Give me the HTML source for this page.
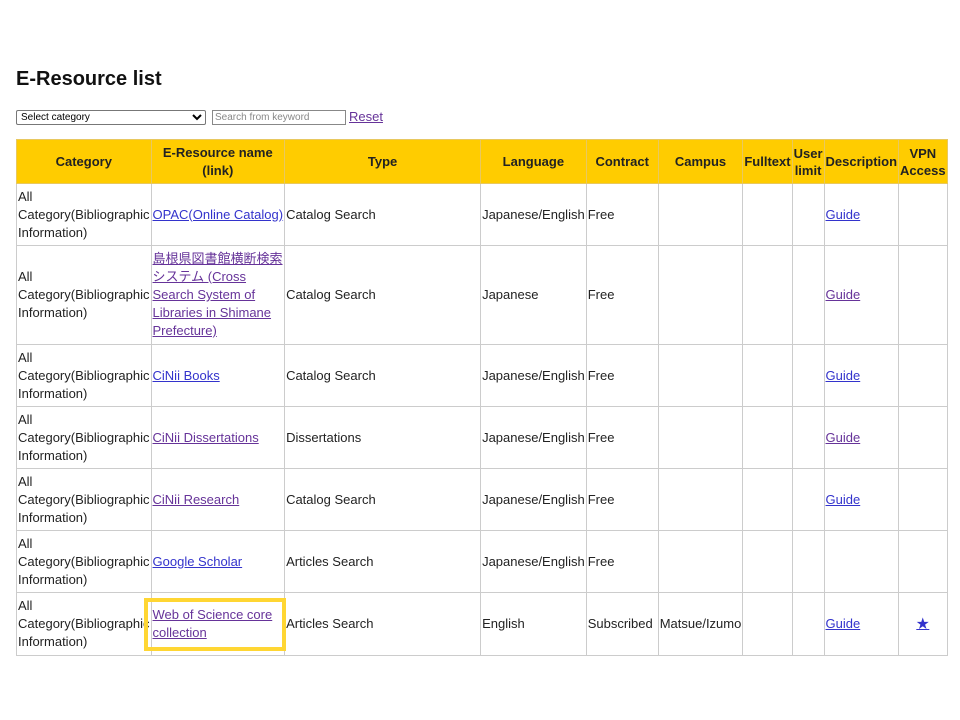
<!DOCTYPE html>
<html><head><meta charset="utf-8"><style>
body{margin:0;background:#fff;font-family:"Liberation Sans","Noto Sans CJK JP",sans-serif;color:#222;}
h1{position:absolute;left:16px;top:68px;margin:0;font-size:20px;font-weight:bold;color:#111;}
select{position:absolute;left:16px;top:110px;width:190px;height:15px;font-size:10px;padding:0;border:1px solid #777;border-radius:2px;background:#fff;}
.kw{position:absolute;left:212px;top:110px;width:128px;height:13px;border:1px solid #888;font-size:10px;color:#888;padding:0 2px;line-height:13px;}
.reset{position:absolute;left:349px;top:109px;font-size:13px;color:#663399;}
table{position:absolute;left:16px;top:139px;border-collapse:collapse;table-layout:fixed;font-size:13px;}
td,th{border:1px solid #ccc;padding:0 1px;overflow:hidden;white-space:nowrap;line-height:18px;vertical-align:middle;text-align:left;}
th{background:#ffcc00;text-align:center;font-weight:bold;color:#222;height:43px;border-color:#e8c860;}
td.w{white-space:normal;}
a{color:#3333cc;}
a.v{color:#663399;}
.hl{position:absolute;left:144px;top:598px;width:134px;height:45px;border:4px solid #ffd633;}
</style></head><body>
<h1>E-Resource list</h1>
<select><option>Select category</option></select>
<div class="kw">Search from keyword</div>
<a class="reset" href="#">Reset</a>
<table>
<colgroup><col style="width:133px"><col style="width:131px"><col style="width:196px"><col style="width:102px"><col style="width:72px"><col style="width:84px"><col style="width:48px"><col style="width:28px"><col style="width:70px"><col style="width:42px"></colgroup>
<tr><th>Category</th><th>E-Resource name<br>(link)</th><th>Type</th><th>Language</th><th>Contract</th><th>Campus</th><th>Fulltext</th><th style="line-height:17px">User<br>limit</th><th>Description</th><th style="line-height:17px">VPN<br>Access</th></tr>
<tr style="height:62px"><td>All<br>Category(Bibliographic<br>Information)</td><td><a href="#">OPAC(Online Catalog)</a></td><td>Catalog Search</td><td>Japanese/English</td><td>Free</td><td></td><td></td><td></td><td><a href="#">Guide</a></td><td></td></tr>
<tr style="height:99px"><td>All<br>Category(Bibliographic<br>Information)</td><td class="w"><a class="v" href="#">島根県図書館横断検索システム (Cross Search System of Libraries in Shimane Prefecture)</a></td><td>Catalog Search</td><td>Japanese</td><td>Free</td><td></td><td></td><td></td><td><a class="v" href="#">Guide</a></td><td></td></tr>
<tr style="height:62px"><td>All<br>Category(Bibliographic<br>Information)</td><td><a href="#">CiNii Books</a></td><td>Catalog Search</td><td>Japanese/English</td><td>Free</td><td></td><td></td><td></td><td><a href="#">Guide</a></td><td></td></tr>
<tr style="height:62px"><td>All<br>Category(Bibliographic<br>Information)</td><td><a class="v" href="#">CiNii Dissertations</a></td><td>Dissertations</td><td>Japanese/English</td><td>Free</td><td></td><td></td><td></td><td><a class="v" href="#">Guide</a></td><td></td></tr>
<tr style="height:62px"><td>All<br>Category(Bibliographic<br>Information)</td><td><a class="v" href="#">CiNii Research</a></td><td>Catalog Search</td><td>Japanese/English</td><td>Free</td><td></td><td></td><td></td><td><a href="#">Guide</a></td><td></td></tr>
<tr style="height:62px"><td>All<br>Category(Bibliographic<br>Information)</td><td><a href="#">Google Scholar</a></td><td>Articles Search</td><td>Japanese/English</td><td>Free</td><td></td><td></td><td></td><td></td><td></td></tr>
<tr style="height:63px"><td>All<br>Category(Bibliographic<br>Information)</td><td class="w"><a class="v" href="#">Web of Science core collection</a></td><td>Articles Search</td><td>English</td><td>Subscribed</td><td>Matsue/Izumo</td><td></td><td></td><td><a href="#">Guide</a></td><td style="text-align:center"><a href="#">★</a></td></tr>
</table>
<div class="hl"></div>
</body></html>
